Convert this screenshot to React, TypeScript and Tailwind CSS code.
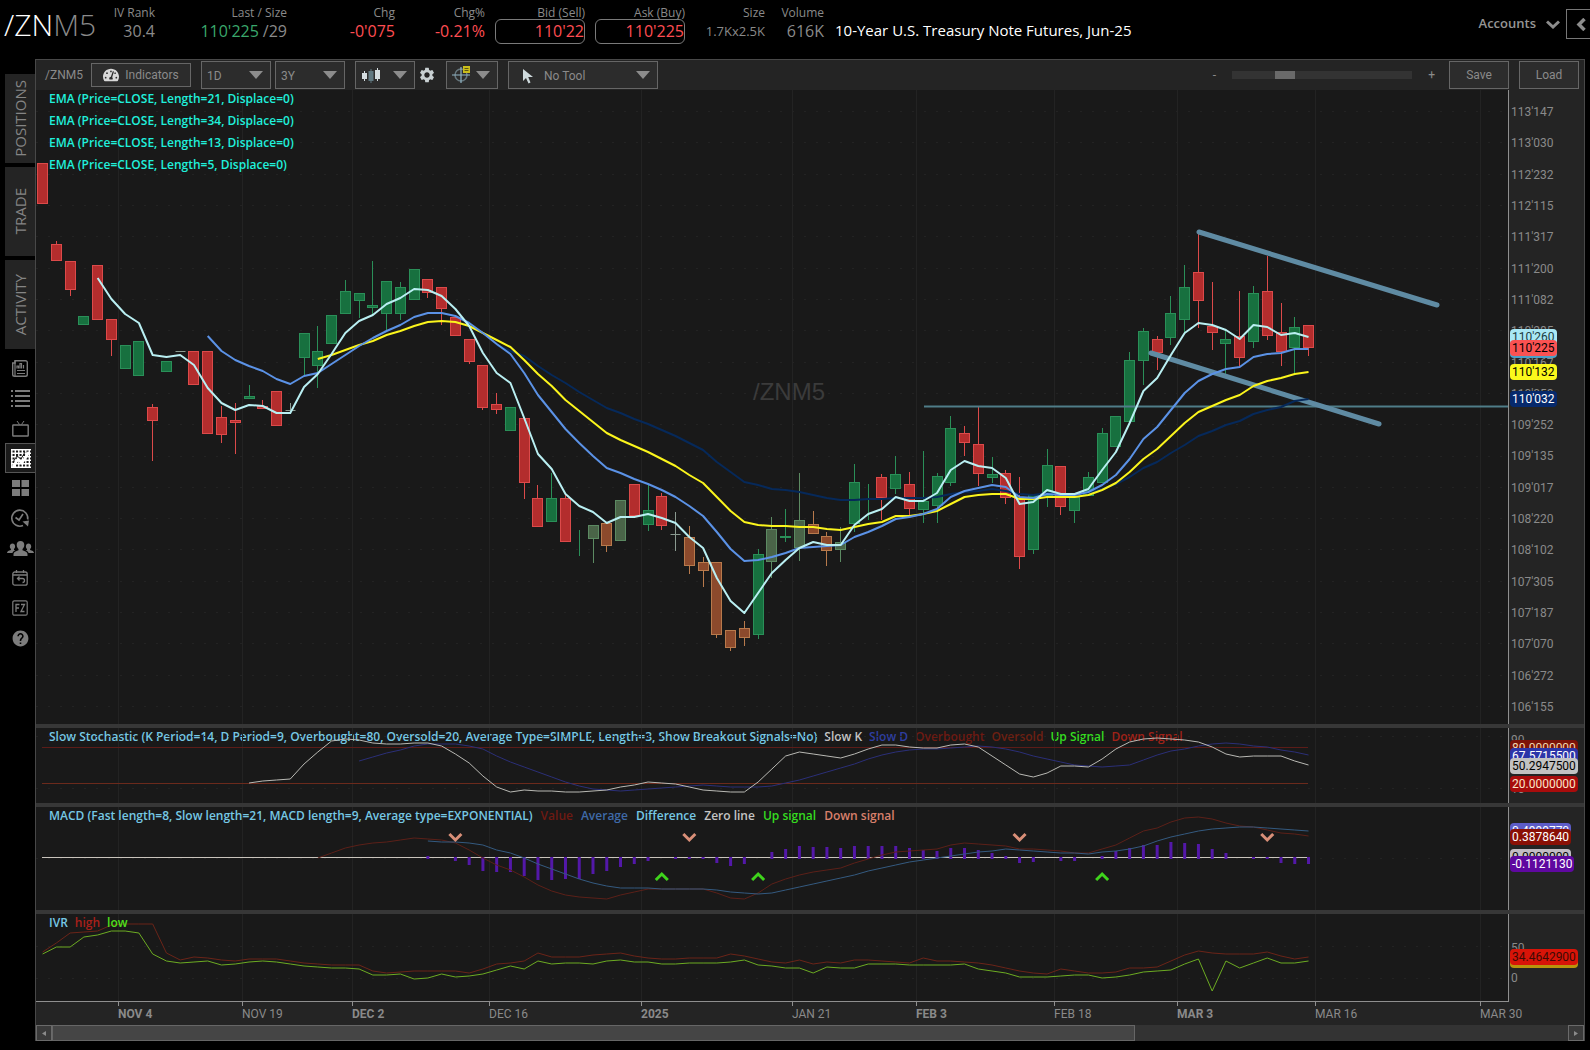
import type { ReactNode } from "react";
import { FaTachometerAlt } from "react-icons/fa";
import { MdHelp, MdSettings } from "react-icons/md";

// Bars are evenly spaced along the time axis; every series shares this scale.
const FIRST_X = 42.6;
const STEP = 13.76;
const barX = (i: number) => FIRST_X + i * STEP;

type Tone = "up" | "down" | "weak" | "soft" | "flat";
// [tone, body top, body bottom, wick top, wick bottom]
type Candle = [Tone, number, number, number, number];

const candles: Candle[] = [
  ["down", 163, 204, 163, 204],
  ["down", 244, 261, 241, 261],
  ["down", 261, 290, 261, 296],
  ["up", 316, 325, 316, 325],
  ["down", 265, 320, 265, 320],
  ["down", 319, 340, 319, 356],
  ["up", 345, 369, 345, 369],
  ["up", 341, 376, 341, 376],
  ["down", 407, 421, 404, 461],
  ["up", 361, 372, 361, 372],
  ["flat", 351, 351, 351, 351],
  ["down", 351, 385, 351, 385],
  ["down", 351, 434, 351, 434],
  ["down", 417, 435, 406, 443],
  ["down", 420, 423, 403, 454],
  ["up", 396, 399, 385, 399],
  ["down", 406, 409, 400, 409],
  ["down", 391, 426, 391, 426],
  ["flat", 410, 410, 403, 410],
  ["up", 333, 358, 333, 376],
  ["up", 351, 366, 326, 388],
  ["up", 315, 344, 315, 344],
  ["up", 291, 314, 280, 314],
  ["up", 293, 301, 293, 318],
  ["up", 305, 308, 261, 316],
  ["up", 281, 314, 281, 332],
  ["up", 287, 314, 282, 320],
  ["up", 269, 300, 269, 300],
  ["down", 279, 293, 279, 298],
  ["down", 287, 309, 287, 325],
  ["down", 317, 336, 317, 336],
  ["down", 339, 362, 339, 364],
  ["down", 365, 408, 365, 410],
  ["down", 404, 410, 393, 414],
  ["up", 407, 431, 407, 431],
  ["down", 418, 483, 418, 499],
  ["down", 498, 527, 485, 527],
  ["up", 498, 522, 473, 522],
  ["down", 498, 542, 493, 542],
  ["up", 533, 534, 530, 556],
  ["soft", 525, 539, 525, 563],
  ["weak", 523, 546, 523, 552],
  ["soft", 500, 541, 500, 541],
  ["down", 484, 516, 484, 516],
  ["up", 510, 525, 484, 531],
  ["down", 496, 526, 493, 530],
  ["flat", 534, 534, 512, 551],
  ["weak", 537, 566, 526, 574],
  ["weak", 562, 571, 557, 587],
  ["weak", 562, 635, 562, 638],
  ["weak", 630, 648, 630, 651],
  ["weak", 628, 638, 621, 646],
  ["up", 554, 635, 549, 639],
  ["soft", 529, 562, 517, 578],
  ["up", 536, 538, 509, 542],
  ["soft", 520, 548, 473, 561],
  ["weak", 524, 534, 511, 534],
  ["weak", 536, 551, 532, 566],
  ["soft", 542, 550, 527, 562],
  ["up", 482, 524, 464, 532],
  ["up", 493, 494, 484, 520],
  ["down", 477, 498, 474, 520],
  ["up", 474, 489, 456, 494],
  ["down", 484, 509, 472, 515],
  ["up", 501, 510, 451, 523],
  ["up", 476, 506, 473, 523],
  ["up", 428, 483, 416, 486],
  ["down", 433, 443, 426, 456],
  ["down", 444, 474, 407, 486],
  ["up", 474, 478, 457, 483],
  ["down", 473, 498, 470, 504],
  ["down", 498, 557, 477, 569],
  ["up", 494, 550, 494, 554],
  ["up", 465, 496, 449, 507],
  ["down", 466, 507, 466, 515],
  ["up", 497, 511, 497, 523],
  ["up", 477, 496, 472, 496],
  ["up", 433, 483, 428, 483],
  ["up", 416, 447, 416, 447],
  ["up", 360, 422, 352, 422],
  ["up", 331, 361, 328, 385],
  ["down", 339, 353, 336, 370],
  ["up", 313, 338, 296, 345],
  ["up", 287, 320, 265, 332],
  ["down", 272, 301, 232, 328],
  ["down", 326, 333, 282, 350],
  ["up", 339, 344, 330, 374],
  ["down", 336, 358, 291, 367],
  ["up", 293, 342, 286, 348],
  ["down", 291, 336, 256, 340],
  ["down", 332, 352, 303, 366],
  ["up", 327, 348, 317, 374],
  ["down", 325, 348, 325, 356],
];

const candleFill: Record<Tone, string> = {
  up: "#17703f",
  down: "#b32d2d",
  weak: "#8c4a2c",
  soft: "#4a6448",
  flat: "#8a8a8a",
};
const candleEdge: Record<Tone, string> = {
  up: "#2a8f58",
  down: "#dc4a4a",
  weak: "#b87a4c",
  soft: "#5c8a62",
  flat: "#8a9a90",
};

type Series = { from: number; color: string; width: number; ys: number[] };

const ema34: Series = {
  from: 33,
  color: "#06295a",
  width: 2,
  ys: [345, 351, 356, 366, 375, 383, 392, 400, 408, 413, 419, 424, 430, 436, 443, 450, 462, 472, 482, 485, 489, 490, 492, 495, 498, 500, 500, 499, 499, 498, 498, 498, 497, 494, 492, 491, 489, 491, 494, 495, 493, 494, 494, 493, 489, 484, 477, 468, 462, 453, 445, 436, 431, 425, 421, 414, 410, 407, 401, 399],
};
const ema21: Series = {
  from: 20,
  color: "#fbf51c",
  width: 2,
  ys: [359, 355, 350, 345, 341, 335, 331, 326, 322, 321, 322, 326, 333, 340, 347, 360, 374, 386, 400, 411, 422, 433, 440, 446, 452, 459, 466, 475, 483, 497, 511, 522, 525, 526, 526, 527, 527, 529, 530, 527, 524, 522, 516, 516, 514, 511, 504, 497, 495, 494, 494, 499, 499, 497, 497, 497, 495, 490, 483, 472, 459, 449, 436, 423, 412, 406, 400, 395, 386, 381, 378, 374, 372],
};
const ema13: Series = {
  from: 12,
  color: "#5b92e6",
  width: 2,
  ys: [336, 351, 360, 366, 371, 379, 384, 376, 373, 364, 355, 346, 338, 331, 325, 317, 313, 313, 316, 323, 333, 344, 354, 373, 395, 412, 429, 443, 456, 468, 473, 479, 484, 490, 497, 506, 516, 532, 549, 561, 560, 557, 553, 548, 547, 546, 545, 537, 532, 526, 519, 517, 514, 509, 497, 491, 488, 485, 487, 497, 498, 494, 495, 495, 492, 485, 475, 459, 439, 427, 410, 393, 381, 374, 369, 367, 357, 354, 353, 349, 349],
};
const ema5: Series = {
  from: 4,
  color: "#b9eff2",
  width: 2,
  ys: [278, 299, 314, 323, 355, 357, 355, 365, 388, 403, 410, 405, 406, 413, 413, 387, 374, 354, 333, 321, 315, 304, 298, 289, 290, 296, 309, 326, 353, 373, 383, 418, 454, 469, 494, 506, 512, 523, 517, 517, 514, 518, 523, 537, 548, 578, 601, 613, 593, 573, 560, 548, 542, 545, 545, 525, 514, 509, 497, 501, 501, 493, 470, 461, 466, 468, 478, 504, 502, 490, 494, 494, 489, 470, 452, 423, 391, 378, 355, 333, 323, 325, 330, 339, 325, 327, 335, 333, 337],
};
const slowK: Series = {
  from: 15,
  color: "#b9b9b4",
  width: 1,
  ys: [783, 781, 780, 779, 764, 752, 741, 739, 740, 743, 744, 744, 743, 743, 746, 754, 763, 776, 787, 792, 790, 791, 791, 792, 792, 791, 790, 787, 785, 782, 783, 784, 787, 790, 791, 792, 792, 782, 769, 756, 752, 754, 756, 758, 754, 749, 745, 745, 747, 748, 748, 745, 744, 747, 756, 765, 774, 777, 773, 766, 766, 767, 759, 749, 742, 739, 738, 739, 740, 742, 747, 754, 757, 756, 756, 756, 761, 765],
};
const slowD: Series = {
  from: 23,
  color: "#2b2f78",
  width: 1,
  ys: [761, 757, 753, 750, 746, 744, 744, 744, 746, 749, 756, 762, 767, 772, 777, 782, 786, 789, 790, 791, 790, 789, 788, 787, 786, 785, 786, 787, 787, 787, 786, 783, 780, 776, 772, 768, 764, 759, 755, 752, 750, 749, 749, 748, 747, 746, 747, 749, 752, 756, 759, 762, 765, 766, 767, 766, 765, 760, 755, 751, 749, 746, 744, 743, 744, 746, 747, 750, 752, 755],
};
const macdValue: Series = {
  from: 20,
  color: "#5c2018",
  width: 1,
  ys: [858, 853, 848, 845, 843, 842, 840, 838, 839, 840, 843, 850, 858, 865, 870, 877, 885, 891, 895, 897, 898, 899, 895, 892, 889, 889, 889, 889, 889, 893, 898, 899, 893, 884, 879, 875, 872, 870, 868, 863, 859, 855, 852, 851, 850, 849, 845, 843, 844, 845, 846, 849, 849, 850, 851, 853, 853, 849, 845, 838, 831, 828, 822, 818, 817, 819, 823, 826, 827, 830, 833, 834, 836],
};
const macdAverage: Series = {
  from: 28,
  color: "#345a80",
  width: 1,
  ys: [841, 842, 842, 843, 845, 850, 853, 858, 864, 869, 874, 879, 883, 886, 888, 888, 888, 889, 889, 889, 889, 890, 892, 893, 894, 893, 890, 887, 884, 881, 878, 875, 871, 868, 865, 862, 860, 858, 856, 854, 852, 851, 849, 850, 851, 852, 853, 853, 854, 852, 851, 849, 846, 841, 837, 834, 831, 829, 828, 827, 827, 828, 829, 830, 831],
};
const ivrHigh: Series = {
  from: 0,
  color: "#6b2418",
  width: 1,
  ys: [952, 943, 933, 932, 931, 925, 924, 924, 924, 953, 960, 957, 958, 960, 961, 959, 959, 959, 961, 963, 964, 965, 965, 965, 971, 973, 972, 971, 971, 971, 971, 973, 969, 964, 963, 961, 953, 957, 957, 957, 955, 954, 953, 956, 958, 959, 959, 958, 958, 958, 954, 956, 959, 962, 963, 960, 964, 962, 963, 960, 960, 961, 962, 963, 958, 961, 961, 962, 963, 965, 968, 971, 973, 974, 969, 971, 973, 973, 972, 968, 968, 967, 961, 955, 951, 953, 954, 954, 954, 952, 956, 959, 957],
};
const ivrLow: Series = {
  from: 0,
  color: "#6cab22",
  width: 1,
  ys: [954, 947, 947, 937, 935, 931, 931, 933, 954, 961, 963, 962, 961, 965, 964, 962, 961, 962, 964, 966, 967, 968, 968, 969, 975, 975, 974, 979, 978, 974, 977, 976, 974, 970, 966, 969, 961, 964, 963, 963, 964, 961, 960, 962, 962, 964, 964, 963, 963, 963, 962, 960, 965, 966, 968, 968, 973, 967, 968, 968, 964, 964, 964, 965, 965, 965, 965, 964, 969, 971, 973, 977, 977, 977, 976, 975, 975, 978, 977, 975, 972, 971, 970, 964, 959, 991, 961, 968, 963, 958, 963, 963, 961],
};

// MACD difference, bar height above (+) or below (-) the zero line, from bar 28
const histogram = [2, 0, -3, -7, -13, -14, -14, -18, -22, -22, -21, -21, -16, -13, -9, -6, -3, 0, -1, -1, -1, -5, -8, -6, 0, 6, 9, 12, 11, 11, 10, 12, 12, 12, 12, 10, 8, 7, 10, 10, 8, 5, 2, -5, -4, 0, -3, -3, 0, 2, 7, 10, 13, 13, 16, 15, 14, 9, 5, 0, 1, -1, -5, -6, -6];
const downSignals = [30, 47, 71, 89];
const upSignals = [45, 52, 77];

const gridX = [118, 242, 352, 489, 641, 792, 916, 1054, 1177, 1315, 1480];
const priceLabels = ["113'147", "113'030", "112'232", "112'115", "111'317", "111'200", "111'082", "110'285", "110'167", "110'050", "109'252", "109'135", "109'017", "108'220", "108'102", "107'305", "107'187", "107'070", "106'272", "106'155"];
const priceGridY = priceLabels.map((_, i) => Math.round(111 + i * 31.32));

const dates = [
  { label: "NOV 4", bold: true },
  { label: "NOV 19", bold: false },
  { label: "DEC 2", bold: true },
  { label: "DEC 16", bold: false },
  { label: "2025", bold: true },
  { label: "JAN 21", bold: false },
  { label: "FEB 3", bold: true },
  { label: "FEB 18", bold: false },
  { label: "MAR 3", bold: true },
  { label: "MAR 16", bold: false },
  { label: "MAR 30", bold: false },
];

function Line({ s }: { s: Series }) {
  const points = s.ys.map((y, i) => `${barX(s.from + i)},${y}`).join(" ");
  return <polyline points={points} fill="none" stroke={s.color} strokeWidth={s.width} strokeLinejoin="round" />;
}

function Plot({ top, height, rows, children }: { top: number; height: number; rows: number[]; children: ReactNode }) {
  return (
    <svg viewBox={`36 ${top} 1472 ${height}`} preserveAspectRatio="none" className="block h-full w-full">
      {gridX.map((x) => (
        <line key={x} x1={x + 0.5} x2={x + 0.5} y1={top} y2={top + height} stroke="#232323" />
      ))}
      {rows.map((y) => (
        <line key={y} x1={36} x2={1508} y1={y + 0.5} y2={y + 0.5} stroke="#232323" strokeDasharray="2 10" />
      ))}
      {children}
    </svg>
  );
}

function Quote({ label, children, className = "" }: { label: string; children: ReactNode; className?: string }) {
  return (
    <div className={`flex flex-col items-end whitespace-nowrap ${className}`}>
      <span className="h-[15px] text-xs leading-[18px] text-[#8a8a8a]">{label}</span>
      <span className="flex h-6 items-center gap-1 text-base leading-6 text-[#8a8a8a]">{children}</span>
    </div>
  );
}

function PriceButton({ children }: { children: ReactNode }) {
  return (
    <button className="h-[25px] w-[90px] rounded-md border border-[#7a7a7a] text-right leading-[22px] text-[#ff4d52]">{children}</button>
  );
}

function Arrow() {
  return (
    <svg width="14" height="8" viewBox="0 0 14 8" className="pointer-events-none absolute top-[9px] right-[7px]">
      <path d="M0 0h14L7 8z" fill="#8c8c8c" />
    </svg>
  );
}

function Picker({ label, value, className }: { label: string; value: string; className: string }) {
  return (
    <div className={`relative h-7 border border-[#666] bg-[#2c2c2c] ${className}`}>
      <select aria-label={label} defaultValue={value} className="h-full w-full appearance-none bg-transparent pt-px pl-[5px] text-xs text-[#8a8a8a] outline-none">
        <option>{value}</option>
      </select>
      <Arrow />
    </div>
  );
}

function Badge({ children, className }: { children: ReactNode; className: string }) {
  return <span className={`absolute left-px h-4 rounded px-[2px] text-xs leading-4 ${className}`}>{children}</span>;
}

function SideButton({ label, active = false, children }: { label: string; active?: boolean; children: ReactNode }) {
  return (
    <button
      aria-label={label}
      className={`flex h-[30px] w-[30px] items-center justify-center ${active ? "border border-r-0 border-[#555] bg-[#1a1a1a] text-white" : "text-[#7c7c7c]"}`}
    >
      {children}
    </button>
  );
}

function Sidebar() {
  return (
    <nav className="flex w-[35px] shrink-0 flex-col items-end pt-[15px]">
      <div className="flex flex-col gap-1">
        {["POSITIONS", "TRADE", "ACTIVITY"].map((t) => (
          <button key={t} className="flex h-[89px] w-[30px] items-center justify-center bg-[#242424] text-[15px] text-[#858585]">
            <span className="rotate-180 [writing-mode:vertical-rl]">{t}</span>
          </button>
        ))}
      </div>
      <div className="flex flex-col pt-1">
        <SideButton label="News">
          <svg width="16" height="17" viewBox="0 0 16 17" fill="none" stroke="currentColor">
            <path d="M3 .7h10.500a1.800 1.800 0 0 1 1.800 1.800v12a1.800 1.800 0 0 1-1.800 1.800h-11A1.800 1.800 0 0 1 .7 14.500V3H3z" strokeWidth="1.400" />
            <path d="M3 .7v15.500M5 10.500h8M5 13.500h8M5 8.500V6h1.500v2.500M8 8.500v-5h1.500v5M11.500 8.500V5" strokeWidth="1.200" />
          </svg>
        </SideButton>
        <SideButton label="Watchlist">
          <svg width="19" height="17" viewBox="0 0 19 17" fill="currentColor">
            <path d="M0 0h2v2H0zM4 0h15v2H4zM0 5h2v2H0zM4 5h15v2H4zM0 10h2v2H0zM4 10h15v2H4zM0 15h2v2H0zM4 15h15v2H4z" />
          </svg>
        </SideButton>
        <SideButton label="Live TV">
          <svg width="17" height="17" viewBox="0 0 17 17" fill="none" stroke="currentColor" strokeWidth="1.400">
            <rect x=".8" y="5" width="15.400" height="11" rx=".5" />
            <path d="M5 1l2.500 3.500M12 1L9.500 4.500" strokeWidth="1" />
          </svg>
        </SideButton>
        <SideButton label="Charts" active>
          <svg width="20" height="19" viewBox="0 0 20 19" fill="none" stroke="currentColor">
            <path d="M.8 0v19M4.300 0v19M7.800 0v19M11.300 0v19M14.800 0v19M18.300 0v19M0 .8h20M0 4.300h20M0 7.800h20M0 11.300h20M0 14.800h20M0 18.200h20" strokeWidth="1.400" />
            <path d="M2 18l5-8 4 4 7-11" stroke="#fff" strokeWidth="2.600" />
            <path d="M2 13l4-6 4 3 4-7" stroke="#1a1a1a" strokeWidth="1" />
          </svg>
        </SideButton>
        <SideButton label="Grid">
          <svg width="17" height="16" viewBox="0 0 17 16" fill="currentColor">
            <path d="M0 0h8v7H0zM9.500 0h7.500v7H9.500zM0 9h8v7H0zM9.500 9h7.500v7H9.500z" />
          </svg>
        </SideButton>
        <SideButton label="History">
          <svg width="20" height="20" viewBox="0 0 20 20" fill="none" stroke="currentColor" strokeWidth="1.600">
            <path d="M17.700 11.500A8 8 0 1 0 13 17.500" />
            <path d="M5.500 9.500l3.500 2.500 4-6" />
            <path d="M12.500 13.500l6.500-1-1 6z" fill="currentColor" stroke="none" />
          </svg>
        </SideButton>
        <SideButton label="Follow feed">
          <svg width="27" height="15" viewBox="0 0 27 15" fill="currentColor" className="shrink-0">
            <path d="M13.500 0c2.300 0 3.800 1.600 3.800 4 0 1.800-.8 3-1.800 3.900v1.300c2.600.8 5 1.800 5 3.800v2h-14v-2c0-2 2.400-3 5-3.800V7.900c-1-.9-1.800-2.100-1.800-3.900 0-2.400 1.500-4 3.800-4z" />
            <path d="M5.500 2.500c1.500 0 2.600 1.200 2.600 2.900 0 1.200-.5 2-1.100 2.600v1c.5.200.9.300 1.200.5-1.700.6-2.500 1.400-2.700 2.500H0c0-1.700 1.800-2.300 3.900-3V8c-.6-.6-1.100-1.400-1.100-2.600 0-1.700 1.200-2.900 2.700-2.900zM21.500 2.500c-1.500 0-2.600 1.200-2.600 2.900 0 1.200.5 2 1.100 2.600v1c-.5.200-.9.300-1.200.5 1.700.6 2.500 1.400 2.700 2.500H27c0-1.700-1.800-2.300-3.900-3V8c.6-.6 1.100-1.400 1.100-2.600 0-1.700-1.200-2.900-2.700-2.900z" />
          </svg>
        </SideButton>
        <SideButton label="Calendar">
          <svg width="16" height="16" viewBox="0 0 16 16" fill="none" stroke="currentColor" strokeWidth="1.300">
            <rect x=".8" y="2" width="14.400" height="13.200" rx="2" />
            <path d="M1 5h14M4.500 0v3M11.500 0v3M10.500 12.500a2 2 0 0 0 0-4H5.500M7.500 6.500l-2 2 2 2" />
          </svg>
        </SideButton>
        <SideButton label="Futures">
          <svg width="16" height="16" viewBox="0 0 16 16" fill="none" stroke="currentColor">
            <rect x=".8" y=".8" width="14.400" height="14.400" rx="1.500" strokeWidth="1.200" />
            <path d="M4 12V4.500h3.500M4 8h3M9 4.500h3.500L9 11.500h3.500" strokeWidth="1.300" />
          </svg>
        </SideButton>
        <SideButton label="Help">
          <MdHelp size={19} />
        </SideButton>
      </div>
    </nav>
  );
}

function Header() {
  return (
    <header className="flex h-[59px] items-start pt-1">
      <h1 className="w-[105px] shrink-0 pl-1 text-3xl leading-[42px] font-light text-white">
        /ZN<span className="text-[#8a8a8a]">M5</span>
      </h1>
      <Quote label="IV Rank" className="w-[50px]">30.4</Quote>
      <Quote label="Last / Size" className="w-[132px]">
        <span className="text-[#3aa86c]">110'225</span>/29
      </Quote>
      <Quote label="Chg" className="w-[108px]">
        <span className="text-[#ff4d52]">-0'075</span>
      </Quote>
      <Quote label="Chg%" className="w-[90px]">
        <span className="text-[#ff4d52]">-0.21%</span>
      </Quote>
      <Quote label="Bid (Sell)" className="w-[100px]">
        <PriceButton>110'22</PriceButton>
      </Quote>
      <Quote label="Ask (Buy)" className="w-[100px]">
        <PriceButton>110'225</PriceButton>
      </Quote>
      <Quote label="Size" className="w-20">
        <span className="text-[13px]">1.7Kx2.5K</span>
      </Quote>
      <Quote label="Volume" className="w-[59px]">616K</Quote>
      <p className="flex-1 truncate pt-[14px] pl-[11px] text-[15px] leading-6 text-white">10-Year U.S. Treasury Note Futures, Jun-25</p>
      <div className="flex items-center gap-[6px] pt-[5px]">
        <button className="flex h-[30px] items-center gap-[10px] text-[13px] font-semibold text-[#959595]">
          Accounts
          <svg width="14" height="9" viewBox="0 0 14 9" fill="none" stroke="#8c8c8c" strokeWidth="3">
            <path d="M1 1.500l6 5.500 6-5.500" />
          </svg>
        </button>
        <button aria-label="Collapse" className="flex h-[30px] w-6 items-center justify-end border border-r-0 border-[#777] pr-1">
          <svg width="10" height="13" viewBox="0 0 10 13" fill="none" stroke="#8c8c8c" strokeWidth="3.500">
            <path d="M8.500 1L3 6.500 8.500 12" />
          </svg>
        </button>
      </div>
    </header>
  );
}

function Toolbar() {
  return (
    <div className="flex h-[30px] items-center bg-[#242424] pr-[5px] font-[Roboto,sans-serif] text-xs text-[#8a8a8a]">
      <span className="w-[55px] pl-[9px]">/ZNM5</span>
      <button className="flex h-6 w-[100px] items-center justify-center gap-[6px] border border-[#666] bg-[#2c2c2c]">
        <FaTachometerAlt size={16} className="text-[#d8d8d8]" />
        Indicators
      </button>
      <Picker label="Aggregation" value="1D" className="ml-[10px] w-[70px]" />
      <Picker label="Range" value="3Y" className="ml-1 w-[70px]" />
      <button aria-label="Chart type" className="relative ml-[10px] h-7 w-[60px] border border-[#666] bg-[#2c2c2c]">
        <svg width="18" height="15" viewBox="0 0 18 15" className="ml-[6px]">
          <path d="M2.500 3v10M15.500 0v13" stroke="#d5dde0" />
          <path d="M9 1v14" stroke="#607880" />
          <path d="M0 5h5v6H0zM13 2h5v9h-5z" fill="#d5dde0" />
          <path d="M6.500 3h5v10h-5z" fill="#607880" />
        </svg>
        <Arrow />
      </button>
      <button aria-label="Chart settings" className="mx-[3px] flex w-[17px] justify-center">
        <MdSettings size={18} className="shrink-0 text-[#c8d0d2]" />
      </button>
      <button aria-label="Crosshair" className="relative ml-2 h-7 w-[52px] border border-[#666] bg-[#2c2c2c]">
        <svg width="20" height="18" viewBox="0 0 20 18" fill="none" className="ml-[5px]">
          <circle cx="9" cy="9" r="6" stroke="#66777e" strokeWidth="1.500" />
          <path d="M9 1v16M0 9h18" stroke="#8fb4c4" strokeWidth="1.200" />
          <path d="M11 0h7v7h-7z" fill="#c9bd1c" />
          <path d="M12.500 2.500h4M12.500 4.500h4" stroke="#5c5610" />
        </svg>
        <Arrow />
      </button>
      <div className="relative ml-[10px] h-7 w-[150px] border border-[#666] bg-[#2c2c2c]">
        <svg width="10" height="15" viewBox="0 0 10 15" className="pointer-events-none absolute top-[7px] left-[14px]">
          <path d="M0 0v12l3-3 2.500 5.500 2-1L5.200 8H10z" fill="#cfdadd" />
        </svg>
        <select aria-label="Drawing tool" defaultValue="No Tool" className="h-full w-full appearance-none bg-transparent pt-px pl-[35px] text-xs text-[#8a8a8a] outline-none">
          <option>No Tool</option>
        </select>
        <Arrow />
      </div>
      <div className="flex flex-1 items-center justify-end gap-4 pr-[14px]">
        <button aria-label="Zoom out">-</button>
        <input
          type="range"
          aria-label="Zoom"
          defaultValue={27}
          className="h-2 w-[180px] appearance-none bg-[#333] [&::-webkit-slider-thumb]:h-2 [&::-webkit-slider-thumb]:w-5 [&::-webkit-slider-thumb]:appearance-none [&::-webkit-slider-thumb]:bg-[#6a6a6a]"
        />
        <button aria-label="Zoom in">+</button>
      </div>
      <button className="h-7 w-[60px] border border-[#666] bg-[#2c2c2c]">Save</button>
      <button className="ml-[10px] h-7 w-[60px] border border-[#666] bg-[#2c2c2c]">Load</button>
    </div>
  );
}

function PricePanel() {
  return (
    <section className="flex h-[634px]">
      <div className="relative min-w-0 flex-1">
        <span className="absolute top-[284px] left-[717px] font-['Liberation_Sans',sans-serif] text-2xl leading-9 text-[#3b3b3b]">/ZNM5</span>
        <Plot top={90} height={634} rows={priceGridY}>
          {candles.map(([tone, top, bottom, high, low], i) => {
            const x = Math.floor(barX(i)) + 0.5;
            return (
              <g key={i} stroke={candleEdge[tone]}>
                <line x1={x} x2={x} y1={high} y2={low} />
                {tone === "flat" ? (
                  <line x1={x - 5} x2={x + 5} y1={top + 0.5} y2={top + 0.5} />
                ) : (
                  <rect x={x - 5} y={top + 0.5} width={10} height={bottom - top - 1} fill={candleFill[tone]} />
                )}
              </g>
            );
          })}
          <line x1={924} x2={1508} y1={406.5} y2={406.5} stroke="#4f7d88" strokeWidth={2} />
          <g stroke="#5f8ba3" strokeWidth={5} strokeLinecap="round">
            <line x1={1199} x2={1437} y1={232} y2={305} />
            <line x1={1151} x2={1379} y1={353} y2={424} />
          </g>
          <Line s={ema34} />
          <Line s={ema21} />
          <Line s={ema13} />
          <Line s={ema5} />
        </Plot>
        <ul className="absolute top-0 left-[13px] text-xs font-semibold text-[#20f0dc]">
          {[21, 34, 13, 5].map((n) => (
            <li key={n} className="h-[22px] leading-[18px]">{`EMA (Price=CLOSE, Length=${n}, Displace=0)`}</li>
          ))}
        </ul>
      </div>
      <Axis>
        <div className="flex h-full flex-col justify-between pt-[15px] pb-[9px]">
          {priceLabels.map((p) => (
            <span key={p} className="h-[15px] leading-[15px]">{p}</span>
          ))}
        </div>
        <Badge className="top-[239px] bg-[#a9e8f5] text-[#1b3a40]">110'260</Badge>
        <Badge className="top-[252px] bg-[#4aa0c8] text-black">110'222</Badge>
        <Badge className="top-[250px] bg-[#fa5252] text-black">110'225</Badge>
        <Badge className="top-[274px] bg-[#fbf81c] text-black">110'132</Badge>
        <Badge className="top-[301px] bg-[#06296c] text-white">110'032</Badge>
      </Axis>
    </section>
  );
}

function Axis({ children }: { children: ReactNode }) {
  return (
    <aside className="relative w-[76px] shrink-0 border-l border-[#8f8f8f] bg-[#242424] pl-[2px] font-[Roboto,sans-serif] text-xs text-[#8a8a8a]">
      {children}
    </aside>
  );
}

function Divider() {
  return <div className="h-1 bg-[#373737]" />;
}

function StochasticPanel() {
  return (
    <section className="flex h-[75px]">
      <div className="relative min-w-0 flex-1">
        <p className="absolute top-0 left-[13px] z-0 flex gap-[7px] text-xs leading-[18px] font-semibold whitespace-nowrap text-[#76c8e4]">
          Slow Stochastic (K Period=14, D Period=9, Overbought=80, Oversold=20, Average Type=SIMPLE, Length=3, Show Breakout Signals=No)
          <span className="text-[#c4c4c4]">Slow K</span>
          <span className="text-[#2f3fa0]">Slow D</span>
          <span className="text-[#6e1a12]">Overbought</span>
          <span className="text-[#6e2012]">Oversold</span>
          <span className="text-[#35dc20]">Up Signal</span>
          <span className="text-[#a02218]">Down Signal</span>
        </p>
        <div className="relative h-full">
          <Plot top={728} height={75} rows={[736, 788]}>
            <line x1={42} x2={1308} y1={747.5} y2={747.5} stroke="#5c1c18" />
            <line x1={42} x2={1308} y1={783.5} y2={783.5} stroke="#6b2a1c" />
            <Line s={slowD} />
            <Line s={slowK} />
          </Plot>
        </div>
      </div>
      <Axis>
        <span className="absolute top-[4px]">90</span>
        <span className="absolute top-[53px]">10</span>
        <Badge className="top-[12px] bg-[#7d1208] text-[#f0d8b0]">80.0000000</Badge>
        <Badge className="top-[20px] bg-[#2c35a8] text-white">67.5715500</Badge>
        <Badge className="top-[30px] bg-[#c2c2c2] text-black">50.2947500</Badge>
        <Badge className="top-[48px] bg-[#a80c0c] text-[#fbe6c8]">20.0000000</Badge>
      </Axis>
    </section>
  );
}

function MacdPanel() {
  return (
    <section className="flex h-[103px]">
      <div className="relative min-w-0 flex-1">
        <Plot top={807} height={103} rows={[858]}>
          <line x1={42} x2={1308} y1={857.5} y2={857.5} stroke="#c9c4bc" />
          {histogram.map((h, i) => (
            <rect key={i} x={barX(28 + i) - 1.5} y={h > 0 ? 858 - h : 857} width={3} height={Math.abs(h) + (h ? 1 : 0)} fill="#5318a8" />
          ))}
          <Line s={macdValue} />
          <Line s={macdAverage} />
          {downSignals.map((i) => (
            <path key={i} d={`M${barX(i) - 6} 834l6 6 6-6`} fill="none" stroke="#d98f78" strokeWidth={3} />
          ))}
          {upSignals.map((i) => (
            <path key={i} d={`M${barX(i) - 6} 880l6-6 6 6`} fill="none" stroke="#3fd41c" strokeWidth={3} />
          ))}
        </Plot>
        <p className="absolute top-0 left-[13px] flex gap-2 text-xs leading-[18px] font-semibold whitespace-nowrap text-[#76c8e4]">
          MACD (Fast length=8, Slow length=21, MACD length=9, Average type=EXPONENTIAL)
          <span className="text-[#6e1a12]">Value</span>
          <span className="text-[#3f6aa8]">Average</span>
          <span className="text-[#76c8e4]">Difference</span>
          <span className="text-[#c4c4c4]">Zero line</span>
          <span className="text-[#35dc20]">Up signal</span>
          <span className="text-[#d8806c]">Down signal</span>
        </p>
      </div>
      <Axis>
        <Badge className="top-[16px] bg-[#5c5cc8] text-white">0.4999770</Badge>
        <Badge className="top-[22px] bg-[#8a1006] text-white">0.3878640</Badge>
        <Badge className="top-[42px] bg-[#c2bcc4] text-black">0.0000000</Badge>
        <Badge className="top-[49px] bg-[#5f08a0] text-white">-0.1121130</Badge>
      </Axis>
    </section>
  );
}

function IvrPanel() {
  return (
    <section className="flex h-[88px]">
      <div className="relative min-w-0 flex-1 border-b border-[#8f8f8f]">
        <Plot top={914} height={87} rows={[946, 978]}>
          <Line s={ivrHigh} />
          <Line s={ivrLow} />
        </Plot>
        <p className="absolute top-0 left-[13px] flex gap-[7px] text-xs leading-[18px] font-semibold text-[#76c8e4]">
          IVR
          <span className="text-[#a8201a]">high</span>
          <span className="text-[#4fe01c]">low</span>
        </p>
      </div>
      <Axis>
        <span className="absolute top-[26px]">50</span>
        <span className="absolute top-[56px]">0</span>
        <Badge className="top-[38px] bg-[#b8940c] text-black">34.4642900</Badge>
        <Badge className="top-[35px] bg-[#d81408] text-[#3c0a04]">34.4642900</Badge>
      </Axis>
    </section>
  );
}

function DateAxis() {
  return (
    <div className="grid h-[23px] grid-cols-[82fr_124fr_110fr_137fr_152fr_151fr_124fr_138fr_123fr_138fr_165fr_104fr] bg-[#242424] font-[Roboto,sans-serif] text-xs text-[#8a8a8a]">
      <span />
      {dates.map((d) => (
        <div key={d.label} className="whitespace-nowrap">
          <div className="h-1 w-px bg-[#8f8f8f]" />
          <span className={`block leading-4 ${d.bold ? "font-bold" : ""}`}>{d.label}</span>
        </div>
      ))}
    </div>
  );
}

function Scrollbar() {
  return (
    <div className="flex h-4 items-stretch bg-[#333]">
      <button aria-label="Scroll left" className="flex w-4 items-center justify-center border border-[#6a6a6a] bg-[#3a3a3a]">
        <svg width="4" height="5" viewBox="0 0 4 5">
          <path d="M4 0v5L0 2.500z" fill="#8a8a8a" />
        </svg>
      </button>
      <div className="flex-1">
        <div className="h-full w-5/7 border border-[#666] bg-[#454545]" />
      </div>
      <button aria-label="Scroll right" className="flex w-4 items-center justify-center border border-[#6a6a6a] bg-[#3a3a3a]">
        <svg width="4" height="5" viewBox="0 0 4 5">
          <path d="M0 0v5l4-2.500z" fill="#8a8a8a" />
        </svg>
      </button>
    </div>
  );
}

export default function App() {
  return (
    <div className="min-h-screen bg-black font-['Open_Sans',sans-serif]">
      <Header />
      <div className="flex pr-[5px]">
        <Sidebar />
        <main className="min-w-0 flex-1 border border-b-0 border-[#484848] bg-[#191919]">
          <Toolbar />
          <PricePanel />
          <Divider />
          <StochasticPanel />
          <Divider />
          <MacdPanel />
          <Divider />
          <IvrPanel />
          <DateAxis />
          <Scrollbar />
        </main>
      </div>
    </div>
  );
}
